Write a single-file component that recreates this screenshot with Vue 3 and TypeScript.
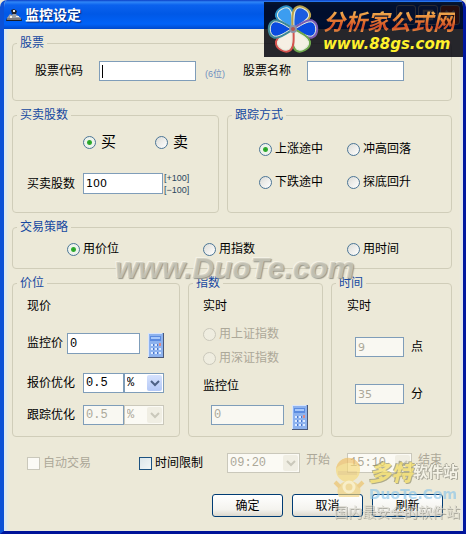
<script setup lang="ts">
import { onMounted, ref } from 'vue'

const code = ref('')
const stockName = ref('')
const side = ref('buy')
const shares = ref(100)
const track = ref('up')
const strategy = ref('price')
const watchPrice = ref('0')
const quoteOpt = ref('0.5')
const trackOpt = ref('0.5')
const indexKind = ref('')
const watchIndex = ref('0')
const hour = ref('9')
const minute = ref('35')
const auto = ref(false)
const limited = ref(false)
const codeBox = ref<HTMLInputElement | null>(null)

const trackModes = [
  { value: 'up', text: '上涨途中' },
  { value: 'spike', text: '冲高回落' },
  { value: 'down', text: '下跌途中' },
  { value: 'bottom', text: '探底回升' },
]
const strategies = [
  { value: 'price', text: '用价位' },
  { value: 'index', text: '用指数' },
  { value: 'time', text: '用时间' },
]
const indexes = [
  { value: 'sh', text: '用上证指数' },
  { value: 'sz', text: '用深证指数' },
]
const petals = [
  { angle: -30, fill: '#3c9df0', line: '#2b8fc4' },
  { angle: 30, fill: '#1c5ce0', line: '#b9a24a' },
  { angle: 90, fill: '#0a4be0', line: '#7d5cb4' },
  { angle: 150, fill: '#f3f1e4', line: '#6da64c' },
  { angle: 210, fill: '#f6efe4', line: '#d4524e' },
  { angle: 270, fill: '#0a4be0', line: '#3d8796' },
]

onMounted(() => codeBox.value?.focus())
</script>

<template>
  <main class="window">
    <header class="titlebar">
      <svg class="app-icon" viewBox="0 0 16 16" aria-hidden="true">
        <path d="M1 11h14l1 3H0z" fill="#1a1d26" />
        <path d="M1 11l3-4 2 1 2-2 3 2 4 3z" fill="#9aa0a8" />
        <path d="M5 3l3-1 3 2-1 3H6z" fill="#23252e" />
        <path d="M7 3h2v2H7zM4 9h2v2H4zM10 9h3v1h-3z" fill="#f1f1ec" />
        <path d="M1 12h14" stroke="#d8d8d8" />
      </svg>
      <h1>监控设定</h1>
      <div class="caption">
        <button type="button" aria-label="最小化"><svg viewBox="0 0 19 19"><path d="M5 14h6" /></svg></button>
        <button type="button" aria-label="最大化"><svg viewBox="0 0 19 19"><path d="M5 5h9v9H5z" /></svg></button>
        <button type="button" class="close" aria-label="关闭"><svg viewBox="0 0 19 19"><path d="M5 5l9 9M14 5l-9 9" /></svg></button>
      </div>
    </header>

    <form class="content" @submit.prevent>
      <fieldset>
        <legend>股票</legend>
        <div class="stock">
          <label for="code">股票代码</label>
          <input id="code" ref="codeBox" v-model="code" class="box wide" :class="{ empty: !code }" type="text" maxlength="6" />
          <span class="hint">(6位)</span>
          <label for="name">股票名称</label>
          <input id="name" v-model="stockName" class="box wide" type="text" />
        </div>
      </fieldset>

      <div class="pair">
        <fieldset>
          <legend>买卖股数</legend>
          <div class="trade">
            <div class="sides">
              <label class="choice"><input v-model="side" type="radio" name="side" value="buy" />买</label>
              <label class="choice"><input v-model="side" type="radio" name="side" value="sell" />卖</label>
            </div>
            <div class="amount">
              <label for="shares">买卖股数</label>
              <input id="shares" v-model="shares" class="box tall sans" type="text" />
              <div class="steps">
                <button type="button" @click="shares = Number(shares) + 100">[+100]</button>
                <button type="button" @click="shares = Number(shares) - 100">[−100]</button>
              </div>
            </div>
          </div>
        </fieldset>
        <fieldset>
          <legend>跟踪方式</legend>
          <div class="tracking">
            <label v-for="m in trackModes" :key="m.value" class="choice">
              <input v-model="track" type="radio" name="track" :value="m.value" />{{ m.text }}
            </label>
          </div>
        </fieldset>
      </div>

      <fieldset>
        <legend>交易策略</legend>
        <div class="strategy">
          <label v-for="s in strategies" :key="s.value" class="choice">
            <input v-model="strategy" type="radio" name="strategy" :value="s.value" />{{ s.text }}
          </label>
        </div>
      </fieldset>

      <div class="trio">
        <fieldset>
          <legend>价位</legend>
          <div class="price">
            <span>现价</span>
            <div class="with-calc">
              <label for="watch-price">监控价</label>
              <input id="watch-price" v-model="watchPrice" class="box tall medium" type="text" />
              <button type="button" class="calc" aria-label="计算器">
                <svg viewBox="0 0 16 25">
                  <path d="M0 0h15v24H0z" fill="#8db2ee" />
                  <path d="M0 0h14v1H1v23H0z" fill="#d9e5fb" />
                  <path d="M15 0h1v25H0v-1h15z" fill="#4a5878" />
                  <path d="M2 3h11v5H2z" fill="#5b8be0" />
                  <path d="M3 4h9v2H3z" fill="#a8c8fa" />
                  <path d="M3 11h2v2H3zM7 11h2v2H7zM3 15h2v2H3zM7 15h2v2H7zM11 15h2v2h-2zM3 19h2v2H3zM7 19h2v2H7zM11 19h2v2h-2z" fill="#dceaff" />
                  <path d="M5 11h1v2H5zM9 11h1v2H9zM5 15h1v2H5zM9 15h1v2H9zM5 19h1v2H5zM9 19h1v2H9z" fill="#4a75cc" />
                  <path d="M11 10h2v3h-2z" fill="#dc8b86" />
                </svg>
              </button>
            </div>
            <div class="percent">
              <label for="quote-opt">报价优化</label>
              <input id="quote-opt" v-model="quoteOpt" class="box small" type="text" />
              <span class="combo">
                <select aria-label="报价优化单位"><option>%</option></select>
                <svg viewBox="0 0 15 16" aria-hidden="true"><path d="M4 6l4 4 4-4" /></svg>
              </span>
            </div>
            <div class="percent last">
              <label for="track-opt">跟踪优化</label>
              <input id="track-opt" v-model="trackOpt" class="box small" type="text" disabled />
              <span class="combo off">
                <select aria-label="跟踪优化单位" disabled><option>%</option></select>
                <svg viewBox="0 0 15 16" aria-hidden="true"><path d="M4 6l4 4 4-4" /></svg>
              </span>
            </div>
          </div>
        </fieldset>

        <fieldset>
          <legend>指数</legend>
          <div class="index">
            <span>实时</span>
            <div class="kinds">
              <label v-for="k in indexes" :key="k.value" class="choice muted">
                <input v-model="indexKind" type="radio" name="index" :value="k.value" disabled />{{ k.text }}
              </label>
            </div>
            <label for="watch-index">监控位</label>
            <div class="with-calc inset">
              <input id="watch-index" v-model="watchIndex" class="box medium" type="text" disabled />
              <button type="button" class="calc" aria-label="计算器">
                <svg viewBox="0 0 16 25">
                  <path d="M0 0h15v24H0z" fill="#8db2ee" />
                  <path d="M0 0h14v1H1v23H0z" fill="#d9e5fb" />
                  <path d="M15 0h1v25H0v-1h15z" fill="#4a5878" />
                  <path d="M2 3h11v5H2z" fill="#5b8be0" />
                  <path d="M3 4h9v2H3z" fill="#a8c8fa" />
                  <path d="M3 11h2v2H3zM7 11h2v2H7zM3 15h2v2H3zM7 15h2v2H7zM11 15h2v2h-2zM3 19h2v2H3zM7 19h2v2H7zM11 19h2v2h-2z" fill="#dceaff" />
                  <path d="M5 11h1v2H5zM9 11h1v2H9zM5 15h1v2H5zM9 15h1v2H9zM5 19h1v2H5zM9 19h1v2H9z" fill="#4a75cc" />
                  <path d="M11 10h2v3h-2z" fill="#dc8b86" />
                </svg>
              </button>
            </div>
          </div>
        </fieldset>

        <fieldset>
          <legend>时间</legend>
          <div class="clock">
            <span>实时</span>
            <div class="part">
              <input id="hour" v-model="hour" class="box narrow sans" type="text" disabled />
              <label for="hour">点</label>
            </div>
            <div class="part">
              <input id="minute" v-model="minute" class="box narrow sans" type="text" disabled />
              <label for="minute">分</label>
            </div>
          </div>
        </fieldset>
      </div>

      <div class="limits">
        <label class="choice muted"><input v-model="auto" type="checkbox" disabled />自动交易</label>
        <label class="choice limit"><input v-model="limited" type="checkbox" />时间限制</label>
        <span class="combo off start">
          <select id="from" disabled><option>09:20</option></select>
          <svg viewBox="0 0 15 16" aria-hidden="true"><path d="M4 6l4 4 4-4" /></svg>
        </span>
        <label for="from" class="edge muted">开始</label>
        <span class="combo off end">
          <select id="to" disabled><option>15:10</option></select>
          <svg viewBox="0 0 15 16" aria-hidden="true"><path d="M4 6l4 4 4-4" /></svg>
        </span>
        <label for="to" class="edge muted">结束</label>
      </div>

      <div class="actions">
        <button type="submit">确定</button>
        <button type="button">取消</button>
        <button type="button">刷新</button>
      </div>
    </form>

    <div class="banner">
      <svg class="flower" viewBox="0 0 54 54" aria-hidden="true">
        <g v-for="p in petals" :key="p.angle" :transform="`rotate(${p.angle} 28 26)`">
          <path d="M28 24C23 16 20 11 21 7c2-5 12-5 14 0c1 4-2 9-7 17z" fill="none" :stroke="p.line" stroke-width="5" stroke-linejoin="round" />
          <path d="M28 24C23 16 20 11 21 7c2-5 12-5 14 0c1 4-2 9-7 17z" :fill="p.fill" stroke="#e6ecdf" stroke-width="1" />
        </g>
        <circle cx="28" cy="26" r="4" fill="#8b93a8" />
        <circle cx="28" cy="26" r="2" fill="#b8584e" />
      </svg>
      <div class="banner-text">
        <strong>分析家公式网</strong>
        <em>www.88gs.com</em>
      </div>
    </div>

    <div class="mark">www.DuoTe.com</div>

    <div class="badge">
      <svg class="mascot" viewBox="0 0 32 42" aria-hidden="true">
        <path d="M6 40C2 32 6 24 16 24s14 8 10 16z" fill="#f2d27c" />
        <circle cx="15" cy="13" r="12" fill="#f6d978" />
        <path d="M3 12C7 6 20 3 27 10C24-2 6-3 3 12z" fill="#eebd62" />
        <path d="M5 14h19v4H5z" fill="#e8c873" />
        <circle cx="16" cy="30" r="5" fill="none" stroke="#fff2c0" stroke-width="3" />
        <path d="M2 25l5 5M30 25l-5 5" stroke="#edc164" stroke-width="4" />
      </svg>
      <div class="badge-name"><b>多特</b><span>软件站</span></div>
      <div class="badge-url">DuoTe.Com</div>
      <div class="badge-line">国内最安全的软件站</div>
    </div>
  </main>
</template>

<style>
body {
  margin: 0;
  background: #ece9d8;
}
</style>

<style scoped>
* {
  box-sizing: border-box;
}
.window {
  position: relative;
  min-height: 100vh;
  overflow: hidden;
  background: #ece9d8;
  border: solid;
  border-width: 0 3px 3px 4px;
  border-color: #0a50dc #0018a0 #001399 #0c51d6;
  border-radius: 7px 7px 0 0;
  color: #000;
  font: 12px/14px "Liberation Sans", "Noto Sans CJK SC", sans-serif;
}
.titlebar {
  display: flex;
  align-items: center;
  height: 29px;
  margin: 0 -3px 0 -4px;
  padding: 0 6px;
  background: linear-gradient(#0b3fc6 0, #2f86f7 2px, #0b62ee 5px, #0058e6 14px, #0062f8 24px, #0049cc 29px);
}
.app-icon {
  width: 16px;
  height: 16px;
}
h1 {
  flex: 1;
  margin: 0 0 0 3px;
  color: #fff;
  font-size: 14px;
  line-height: 20px;
  text-shadow: 1px 1px 1px #0b2a78;
}
.caption {
  display: flex;
  gap: 2px;
}
.caption button {
  width: 20px;
  height: 20px;
  padding: 0;
  background: #2a62dd;
  border: 1px solid #fff;
  border-radius: 3px;
}
.caption .close {
  background: #e9552c;
}
.caption svg {
  display: block;
  fill: none;
  stroke: #fff;
  stroke-width: 2;
}
.content {
  display: flex;
  flex-direction: column;
  gap: 7px;
  padding: 7px 11px 14px 8px;
  box-shadow: inset 4px 0 2px -1px #dbe8f2, inset -3px 0 2px -1px #dfe4ee;
}
fieldset {
  min-width: 0;
  margin: 0;
  padding: 0;
  border: 1px solid #d0cdb9;
  border-radius: 4px;
}
legend {
  margin-left: 4px;
  padding: 0 3px;
  color: #1648a0;
}
.pair {
  display: grid;
  grid-template-columns: 207fr 225fr;
  gap: 8px;
}
.trio {
  display: grid;
  grid-template-columns: 168fr 135fr 121fr;
  gap: 8px;
}
.box {
  height: 20px;
  padding: 0 2px;
  background: #fff;
  border: 1px solid #7f9db9;
  border-radius: 0;
  color: #000;
  font: 12px/16px "Liberation Mono", monospace;
  outline: 0;
}
.box:disabled {
  background: #f9f8f2;
  color: #aca899;
}
.box.tall {
  height: 21px;
}
.box.sans {
  font: 11px/16px "DejaVu Sans", sans-serif;
}
.box.wide {
  width: 97px;
}
.box.medium {
  width: 73px;
}
.box.small {
  width: 41px;
}
.box.narrow {
  width: 49px;
}
/* steady insertion bar while the focused box has nothing in it */
.box.empty:focus {
  background: linear-gradient(#000, #000) 2px 3px / 1px 13px no-repeat #fff;
  caret-color: transparent;
}
.choice {
  display: flex;
  align-items: center;
  gap: 3px;
  white-space: nowrap;
}
.muted {
  color: #aca899;
}
input[type='radio'],
input[type='checkbox'] {
  flex: none;
  appearance: none;
  width: 13px;
  height: 13px;
  margin: 0;
  background: linear-gradient(135deg, #dcdcd7, #fff);
  border: 1px solid #1d5281;
}
input[type='radio'] {
  border-color: #4b7596;
  border-radius: 50%;
}
input[type='radio']:checked {
  background: radial-gradient(circle, #21a121 0, #35ad35 2px, #eef3ec 3px);
}
input[type='radio']:disabled,
input[type='checkbox']:disabled {
  background: #fbfaf5;
  border-color: #cac8bb;
}
input[type='radio']:disabled {
  background: #efede0;
}
.stock {
  display: flex;
  align-items: center;
  padding: 11px 0 19px 22px;
}
.stock label {
  margin-right: 16px;
}
.hint {
  width: 31px;
  margin-right: 16px;
  padding: 6px 0 0 9px;
  color: #6f8fc0;
  font-size: 9px;
  line-height: 14px;
  white-space: nowrap;
}
.trade {
  padding: 9px 0 18px 14px;
}
.sides {
  display: flex;
  gap: 39px;
  margin-bottom: 20px;
  padding-left: 56px;
  font-size: 15px;
  line-height: 22px;
}
.sides .choice {
  gap: 5px;
}
.amount {
  display: flex;
  align-items: center;
  gap: 8px;
  height: 21px;
}
.amount .box {
  width: 80px;
}
.steps {
  display: flex;
  flex-direction: column;
  margin-left: -7px;
}
.steps button {
  padding: 0;
  background: none;
  border: 0;
  color: #2b4560;
  font: 9px/12px "Liberation Sans", sans-serif;
}
.tracking {
  display: grid;
  grid-template-columns: 88px 1fr;
  gap: 19px 0;
  padding: 20px 0 0 31px;
}
.strategy {
  display: grid;
  grid-template-columns: 136px 144px 1fr;
  padding: 8px 0 12px 54px;
}
.price,
.index,
.clock {
  display: flex;
  flex-direction: column;
  padding: 9px 0 6px 14px;
}
.with-calc {
  display: flex;
  align-items: flex-start;
  gap: 8px;
  margin: 20px 0 15px;
}
.with-calc label {
  margin-right: -4px;
  line-height: 21px;
}
.with-calc.inset {
  margin: 12px 0 0 8px;
}
.calc {
  width: 16px;
  height: 25px;
  padding: 0;
  background: none;
  border: 0;
}
.calc svg {
  display: block;
}
.percent {
  display: flex;
  align-items: center;
}
.percent.last {
  margin: 12px 0 5px;
}
.percent label {
  margin-right: 8px;
}
.combo {
  position: relative;
  display: block;
  width: 40px;
  height: 20px;
}
.combo select {
  display: block;
  appearance: none;
  width: 100%;
  height: 20px;
  padding: 0 2px;
  background: #fff;
  border: 1px solid #7f9db9;
  border-radius: 0;
  color: #000;
  font: 12px/16px "Liberation Mono", monospace;
}
.combo svg {
  position: absolute;
  top: 2px;
  right: 2px;
  width: 15px;
  height: 16px;
  background: linear-gradient(#d6e2fd, #b4c8f6);
  border-radius: 2px;
  fill: none;
  stroke: #4d6185;
  stroke-width: 2;
  pointer-events: none;
}
.combo.off select {
  background: #fbfaf4;
  border-color: #cac8bb;
  color: #aca899;
  opacity: 1;
}
.combo.off svg {
  background: #f0eee3;
  stroke: #cac8bb;
}
.kinds {
  display: flex;
  flex-direction: column;
  gap: 10px;
  margin: 14px 0;
}
.clock {
  padding-left: 15px;
}
.part {
  display: flex;
  align-items: center;
  gap: 7px;
  margin-top: 24px;
  padding-left: 8px;
}
.part + .part {
  margin-top: 27px;
}
.limits {
  display: flex;
  align-items: center;
  height: 20px;
  margin-top: 9px;
  padding-left: 15px;
}
.limit {
  margin: 0 24px 0 48px;
}
.limit input {
  background: linear-gradient(135deg, #dce6ea, #f2f6f6);
}
.combo.start {
  width: 73px;
}
.combo.end {
  width: 65px;
  margin-left: 17px;
}
.edge {
  align-self: flex-start;
  margin-left: 6px;
}
.actions {
  display: flex;
  justify-content: flex-end;
  gap: 9px;
  margin-top: 14px;
  padding-right: 9px;
}
.actions button {
  width: 71px;
  height: 23px;
  padding: 0;
  background: linear-gradient(#fff, #f4f3ee 70%, #dcd8cd);
  border: 1px solid #003c74;
  border-radius: 3px;
  color: #000;
  font: inherit;
}
.banner {
  position: absolute;
  top: 2px;
  right: -1px;
  display: flex;
  align-items: center;
  gap: 4px;
  width: 200px;
  height: 55px;
  padding-left: 1px;
  background: rgba(0, 0, 10, 0.84);
  white-space: nowrap;
}
.flower {
  flex: none;
  width: 54px;
  height: 54px;
}
.banner-text {
  display: flex;
  flex-direction: column;
}
.banner strong {
  background: linear-gradient(#f5d267, #e88436 45%, #d04a24 75%, #f0a850);
  background-clip: text;
  color: transparent;
  font: italic 700 22px/28px "Noto Sans CJK SC", sans-serif;
}
.banner em {
  color: #fff12c;
  font: italic bold 15px/20px "DejaVu Sans", sans-serif;
}
.mark {
  position: absolute;
  top: 252px;
  left: 111px;
  color: rgba(204, 202, 188, 0.8);
  font: italic bold 30px/32px "Liberation Sans", sans-serif;
  text-shadow: 1px 1px 1px #99988c, -1px -1px 0 #f4f2e6;
  pointer-events: none;
}
.badge {
  position: absolute;
  right: 2px;
  bottom: 10px;
  width: 128px;
  padding-left: 36px;
  opacity: 0.65;
  white-space: nowrap;
  pointer-events: none;
}
.mascot {
  position: absolute;
  top: 0;
  left: 0;
  width: 32px;
  height: 42px;
}
.badge-name {
  display: flex;
  align-items: center;
  height: 28px;
  font-family: "Noto Sans CJK SC", sans-serif;
  font-weight: bold;
}
.badge-name b {
  color: #f2d951;
  font-size: 22px;
  font-style: italic;
  text-shadow: 1px 1px 0 #8e8b64, -1px -1px 0 #8e8b64;
}
.badge-name span {
  color: #faf9ef;
  font-size: 15px;
  text-shadow: 1px 1px 0 #88877c, -1px 0 0 #88877c, 0 -1px 0 #88877c;
}
.badge-url {
  color: #8cc6ea;
  font: bold 14px/18px "DejaVu Sans", sans-serif;
}
.badge-line {
  margin-left: -35px;
  color: #d6d4ca;
  font-size: 14px;
  line-height: 18px;
  text-shadow: 1px 1px 0 #8f8e84;
}
</style>
